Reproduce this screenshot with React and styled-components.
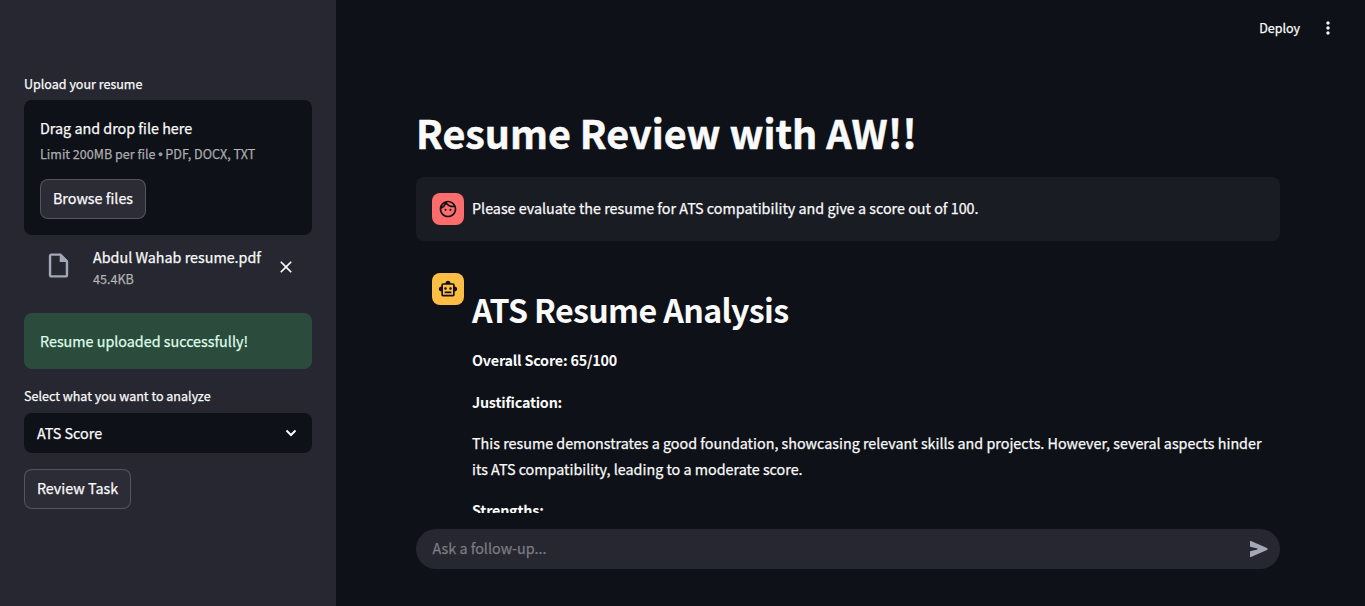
import React from "react";
import styled, { createGlobalStyle } from "styled-components";
import {
  MdClose,
  MdMoreVert,
  MdOutlineFace,
  MdOutlineInsertDriveFile,
  MdOutlineSmartToy,
} from "react-icons/md";

const GlobalStyle = createGlobalStyle`
  * { box-sizing: border-box; }
  body {
    margin: 0;
    background: #0e1117;
    color: #fafafa;
    font-family: "Source Sans Pro", "Noto Sans CJK SC", "Noto Sans", sans-serif;
    font-size: 14.33px;
    -webkit-text-stroke: 0.25px currentColor;
    overflow: hidden;
  }
  h1, h2, p { margin: 0; }
  button { font: inherit; color: inherit; cursor: pointer; }
  svg { display: block; flex: none; }
`;

const Page = styled.div`
  display: flex;
  height: 606px;
`;

const Sidebar = styled.aside`
  width: 336px;
  flex: none;
  padding: 73px 24px 0;
  background: #262730;
`;

const Label = styled.div`
  height: ${(p) => p.$height};
  font-size: 12.54px;
  line-height: 22px;
`;

const Dropzone = styled.div`
  height: 135px;
  padding: 16px;
  border-radius: 8px;
  background: #0e1117;
`;

const DropTitle = styled.div`
  line-height: 24px;
`;

const Muted = styled.div`
  color: rgba(250, 250, 250, 0.6);
  font-size: 12.55px;
  line-height: 20px;
`;

const Limit = styled(Muted)`
  height: 39px;
  padding-top: 4px;
  white-space: nowrap;
`;

const Bullet = styled.span`
  margin: 0 -0.1px;
  font-family: "Liberation Sans", sans-serif;
`;

const Button = styled.button`
  display: flex;
  align-items: center;
  justify-content: center;
  width: ${(p) => p.$width};
  height: 40px;
  padding: 0 0 3px;
  border: 1px solid rgba(250, 250, 250, 0.2);
  border-radius: 8px;
  background: #2b2c36;
  white-space: nowrap;
`;

const FileRow = styled.div`
  display: flex;
  align-items: center;
  height: 78px;
  padding: 0 16px 15px 20px;
`;

const FileIcon = styled(MdOutlineInsertDriveFile)`
  margin-bottom: 2px;
  color: #a3a8b8;
`;

const FileInfo = styled.div`
  flex: 1;
  margin-left: 20px;
  padding-top: 2px;
  white-space: nowrap;
`;

const FileName = styled.div`
  line-height: 22px;
`;

const FileSize = styled(Muted)`
  padding-top: 1px;
`;

const Success = styled.div`
  height: 56px;
  margin-bottom: 16px;
  padding: 16px;
  border-radius: 8px;
  background: #2b4b3c;
  color: #dffde9;
  line-height: 24px;
`;

const Select = styled.div`
  display: flex;
  align-items: center;
  justify-content: space-between;
  height: 40px;
  margin-bottom: 16px;
  padding: 0 15px 1px 13px;
  border-radius: 8px;
  background: #0e1117;
`;

const Main = styled.main`
  display: flex;
  flex: 1;
  flex-direction: column;
  min-width: 0;
`;

const Toolbar = styled.header`
  display: flex;
  align-items: center;
  justify-content: flex-end;
  gap: 18px;
  flex: none;
  height: 56px;
  padding-right: 27px;
  font-size: 12.5px;
`;

const Deploy = styled.div`
  padding-bottom: 2px;
`;

const Content = styled.section`
  flex: none;
  height: 457px;
  padding: 49px 85px 0 80px;
  overflow: hidden;
`;

const Title = styled.h1`
  height: 72px;
  font-size: 39.45px;
  font-weight: 700;
  line-height: 53px;
  white-space: nowrap;
  -webkit-text-stroke: 0.5px currentColor;
`;

const Message = styled.article`
  display: flex;
  gap: 8px;
  margin-bottom: 16px;
  padding: 16px;
  border-radius: 8px;
  background: ${(p) => (p.$user ? "#1a1c24" : "transparent")};
`;

const Avatar = styled.div`
  display: flex;
  align-items: center;
  justify-content: center;
  flex: none;
  width: 32px;
  height: 32px;
  border-radius: 8px;
  background: ${(p) => p.$color};
  color: #0e1117;
`;

const MessageBody = styled.div`
  flex: 1;
  min-width: 0;
  line-height: 25.6px;
`;

const UserText = styled.p`
  padding-top: 2px;
`;

const Heading = styled.h2`
  padding: 15px 0 16px;
  font-size: 32.2px;
  font-weight: 600;
  line-height: 43px;
  letter-spacing: -0.65px;
  -webkit-text-stroke: 0;
`;

const Paragraph = styled.p`
  margin-bottom: 16px;
  white-space: nowrap;
`;

const Strong = styled.strong`
  font-weight: 600;
  letter-spacing: -0.2px;
  -webkit-text-stroke: 0;
`;

const ChatBar = styled.div`
  display: flex;
  align-items: center;
  justify-content: space-between;
  height: 40px;
  margin: 16px 85px 0 80px;
  padding: 0 12px 0 16.5px;
  border-radius: 20px;
  background: #262730;
  color: #7b7c81;
`;

const Placeholder = styled.div`
  padding-bottom: 3px;
`;

const Chevron = () => (
  <svg width="12" height="8" viewBox="0 0 12 8" fill="none">
    <path d="M1.5 1.5 6 6l4.500-4.500" stroke="#fafafa" strokeWidth="2" />
  </svg>
);

const SendIcon = () => (
  <svg width="18" height="16" viewBox="0 0 18 16">
    <path d="M0 0h1L17.500 7.300v1.400L1 16H0v-5.800L7.500 8.400v-.8L0 5.800Z" fill="#a3a8b8" />
  </svg>
);

export default function App() {
  return (
    <Page>
      <GlobalStyle />
      <Sidebar>
        <Label $height="27px">Upload your resume</Label>
        <Dropzone>
          <DropTitle>Drag and drop file here</DropTitle>
          <Limit>Limit 200MB per file <Bullet>•</Bullet> PDF, DOCX, TXT</Limit>
          <Button $width="106px">Browse files</Button>
        </Dropzone>
        <FileRow>
          <FileIcon size={29} />
          <FileInfo>
            <FileName>Abdul Wahab resume.pdf</FileName>
            <FileSize>45.4KB</FileSize>
          </FileInfo>
          <MdClose size={20} />
        </FileRow>
        <Success>Resume uploaded successfully!</Success>
        <Label $height="28px">Select what you want to analyze</Label>
        <Select>
          ATS Score
          <Chevron />
        </Select>
        <Button $width="107px">Review Task</Button>
      </Sidebar>
      <Main>
        <Toolbar>
          <Deploy>Deploy</Deploy>
          <MdMoreVert size={20} />
        </Toolbar>
        <Content>
          <Title>Resume Review with AW!!</Title>
          <Message $user>
            <Avatar $color="#ff6c6c"><MdOutlineFace size={20} /></Avatar>
            <MessageBody>
              <UserText>
                Please evaluate the resume for ATS compatibility and give a score out of 100.
              </UserText>
            </MessageBody>
          </Message>
          <Message>
            <Avatar $color="#ffbd45"><MdOutlineSmartToy size={20} /></Avatar>
            <MessageBody>
              <Heading>ATS Resume Analysis</Heading>
              <Paragraph><Strong>Overall Score: 65/100</Strong></Paragraph>
              <Paragraph><Strong>Justification:</Strong></Paragraph>
              <Paragraph>
                This resume demonstrates a good foundation, showcasing relevant skills and projects. However, several aspects hinder
                <br />
                its ATS compatibility, leading to a moderate score.
              </Paragraph>
              <Paragraph><Strong>Strengths:</Strong></Paragraph>
            </MessageBody>
          </Message>
        </Content>
        <ChatBar>
          <Placeholder>Ask a follow-up...</Placeholder>
          <SendIcon />
        </ChatBar>
      </Main>
    </Page>
  );
}
